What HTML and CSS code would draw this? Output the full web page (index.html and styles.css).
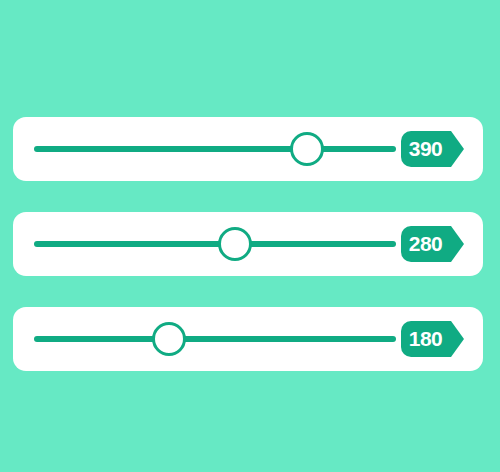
FILE: index.html
```html
<!DOCTYPE html>
<html lang="en">
<head>
    <meta charset="UTF-8">
    <meta name="viewport" content="width=device-width, initial-scale=1.0">
    <title>Range Sliders</title>
    <link rel="stylesheet" href="styles.css">
</head>
<body>
    <div class="sliders">
        <div class="card">
            <input type="range" class="range" min="0" max="500" value="390">
            <span class="value">390</span>
        </div>
        <div class="card">
            <input type="range" class="range" min="0" max="500" value="280">
            <span class="value">280</span>
        </div>
        <div class="card">
            <input type="range" class="range" min="0" max="500" value="180">
            <span class="value">180</span>
        </div>
    </div>

    <script>
        const ranges = document.querySelectorAll('.range');

        function handleUpdate(){
            // show the current value in the tag next to the slider
            this.nextElementSibling.textContent = this.value;
        }

        ranges.forEach(range => range.addEventListener('input', handleUpdate));
    </script>
</body>
</html>
```
FILE: styles.css
```css
:root {
    --bg: #66e9c4;
    --green: #10ab83;
}
body {
    margin: 0;
    background: var(--bg);
    font-family: "Liberation Sans", Arial, sans-serif;
}
.sliders {
    display: flex;
    flex-direction: column;
    gap: 31px;
    padding: 117px 17px 0 13px;
}
.card {
    display: flex;
    align-items: center;
    height: 64px;
    padding: 0 20px 0 21px;
    background: #fff;
    border-radius: 13px;
}
.range {
    -webkit-appearance: none;
    appearance: none;
    width: 362px;
    height: 6px;
    margin: 0 5px 0 0;
    background: var(--green);
    border-radius: 3px;
    outline: none;
}
.range::-webkit-slider-thumb {
    -webkit-appearance: none;
    width: 34px;
    height: 34px;
    box-sizing: border-box;
    background: #fff;
    border: 3px solid var(--green);
    border-radius: 50%;
    cursor: pointer;
}
.value {
    position: relative;
    width: 49px;
    height: 36px;
    line-height: 36px;
    padding-right: 1px;
    text-align: center;
    color: #fff;
    font-size: 21px;
    font-weight: bold;
    letter-spacing: -0.5px;
    background: var(--green);
    border-radius: 10px 0 0 10px;
}
/* arrow tip on the right of the value tag */
.value::after {
    content: "";
    position: absolute;
    top: 0;
    left: 100%;
    border-left: 13px solid var(--green);
    border-top: 18px solid transparent;
    border-bottom: 18px solid transparent;
}
```
